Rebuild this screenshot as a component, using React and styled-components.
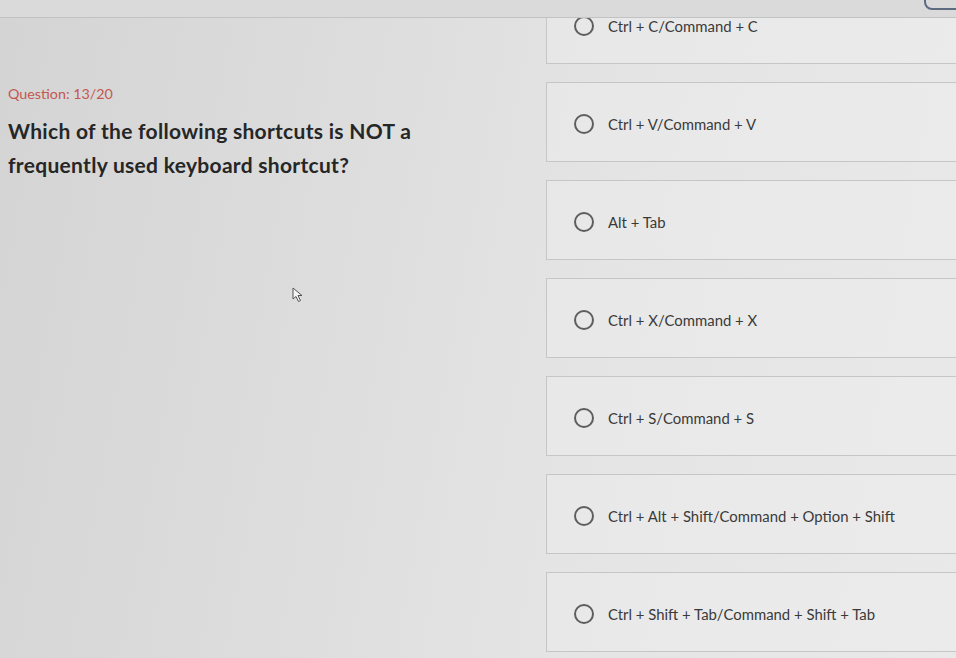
import React from 'react'
import styled, { createGlobalStyle } from 'styled-components'

const GlobalStyle = createGlobalStyle`
  html, body {
    margin: 0;
    padding: 0;
    height: 100%;
    overflow: hidden;
  }
  body {
    font-family: 'Lato', 'Noto Sans', sans-serif;
    background: #dcdcdc;
  }
`

const Page = styled.div`
  position: relative;
  width: 956px;
  height: 658px;
  overflow: hidden;
  background: linear-gradient(100deg, #d4d4d4 0%, #dddddd 35%, #e4e4e4 60%, #e9e9e9 100%);
`

const Header = styled.div`
  position: absolute;
  top: 0;
  left: 0;
  right: 0;
  height: 17px;
  background: #dadada;
  border-bottom: 1px solid #c2c2c2;
  z-index: 2;
`

const HeaderButton = styled.div`
  position: absolute;
  top: -18px;
  left: 924px;
  width: 50px;
  height: 24px;
  border: 2px solid #5d6b80;
  border-radius: 8px;
`

const Layout = styled.div`
  display: grid;
  grid-template-columns: 546px 1fr;
  height: 100%;
`

const QuestionPane = styled.div`
  padding: 85px 0 0 8px;
`

const Counter = styled.div`
  font-size: 14.3px;
  color: #c4574f;
  margin-bottom: 12px;
`

const QuestionText = styled.h2`
  margin: 0;
  font-size: 21px;
  font-weight: 700;
  letter-spacing: 0.3px;
  line-height: 34px;
  color: #262626;
  width: 430px;
`

const Options = styled.div`
  display: flex;
  flex-direction: column;
  gap: 18px;
  margin-top: -16px;
  margin-right: -20px;
`

const Option = styled.label`
  display: flex;
  align-items: center;
  gap: 14px;
  box-sizing: border-box;
  height: 80px;
  padding: 4px 0 0 27px;
  border: 1px solid #c6c6c6;
  background: rgba(240, 240, 240, 0.35);
  cursor: pointer;
`

const Radio = styled.span`
  box-sizing: border-box;
  width: 20px;
  height: 20px;
  border: 2px solid #5e5e5e;
  border-radius: 50%;
  flex-shrink: 0;
`

const OptionText = styled.span`
  font-size: 14.9px;
  color: #3a3a3a;
`

const Cursor = styled.svg`
  position: absolute;
  left: 292px;
  top: 287px;
`

const options = [
  'Ctrl + C/Command + C',
  'Ctrl + V/Command + V',
  'Alt + Tab',
  'Ctrl + X/Command + X',
  'Ctrl + S/Command + S',
  'Ctrl + Alt + Shift/Command + Option + Shift',
  'Ctrl + Shift + Tab/Command + Shift + Tab',
]

export default function App() {
  return (
    <Page>
      <GlobalStyle />
      <Header>
        <HeaderButton />
      </Header>
      <Layout>
        <QuestionPane>
          <Counter>Question: 13/20</Counter>
          <QuestionText>
            Which of the following shortcuts is NOT a frequently used keyboard shortcut?
          </QuestionText>
        </QuestionPane>
        <Options>
          {options.map(text => (
            <Option key={text}>
              <Radio />
              <OptionText>{text}</OptionText>
            </Option>
          ))}
        </Options>
      </Layout>
      <Cursor width="12" height="16" viewBox="0 0 12 16">
        <path
          d="M1 1 L1 12 L4 9.5 L6.5 14.5 L8.5 13.5 L6 8.5 L10 8.5 Z"
          fill="#f4f4f4"
          stroke="#555"
          strokeWidth="1"
          strokeLinejoin="round"
        />
      </Cursor>
    </Page>
  )
}
